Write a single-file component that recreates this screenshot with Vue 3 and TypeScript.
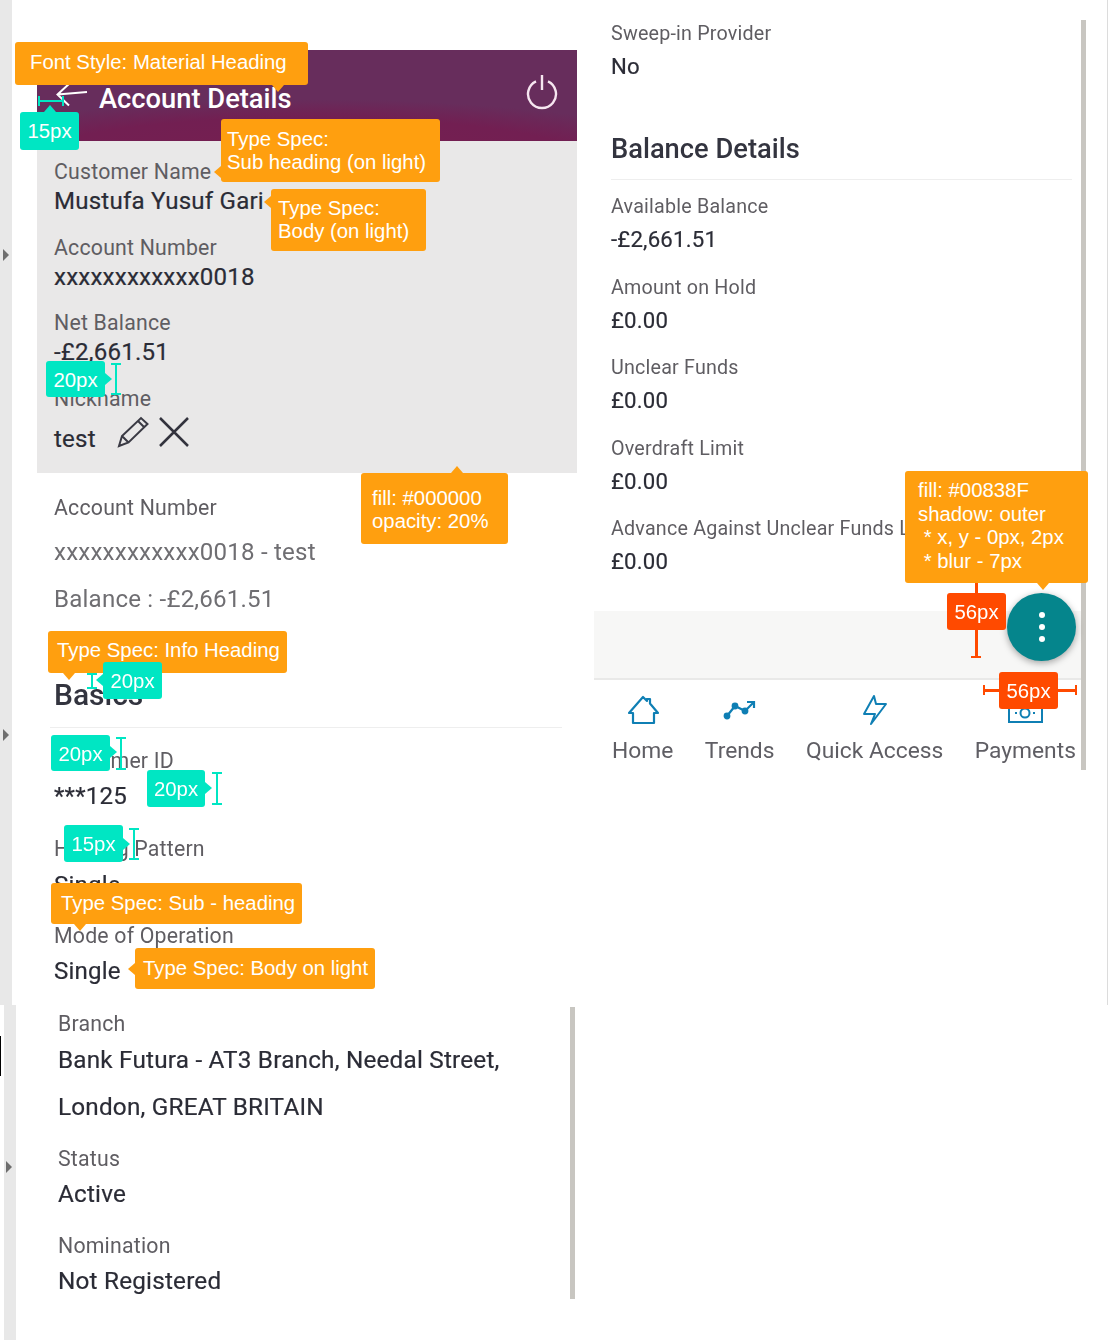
<script setup lang="ts">
interface Field { label: string; value: string }
const balances: Field[] = [
  { label: 'Available Balance', value: '-£2,661.51' },
  { label: 'Amount on Hold', value: '£0.00' },
  { label: 'Unclear Funds', value: '£0.00' },
  { label: 'Overdraft Limit', value: '£0.00' },
  { label: 'Advance Against Unclear Funds Limit', value: '£0.00' },
]
const summary: Field[] = [
  { label: 'Customer Name', value: 'Mustufa Yusuf Gari' },
  { label: 'Account Number', value: 'xxxxxxxxxxxx0018' },
  { label: 'Net Balance', value: '-£2,661.51' },
]
</script>

<template>
  <div class="page">
    <div class="top-row">
      <div class="rail">
        <i class="caret c1"></i>
        <i class="caret c2"></i>
      </div>

      <section class="left-col soft">
        <header class="app-bar">
          <svg class="back" viewBox="0 0 32 24" fill="none" stroke="#fff" stroke-width="2">
            <path d="M31 8 1.500 10.500M14 -1 1.500 10.500 13 21.500" />
          </svg>
          <h1 class="bar-title">Account Details</h1>
          <svg class="power" viewBox="0 0 32 36" fill="none" stroke="#f6e6f0" stroke-width="2.400">
            <path d="M10 7.400a14 14 0 1 0 12 0M16 1v15" />
          </svg>
        </header>

        <div class="summary">
          <div v-for="f in summary" :key="f.label" class="field summary-field">
            <div class="label">{{ f.label }}</div>
            <div class="value">{{ f.value }}</div>
          </div>
          <div class="field">
            <div class="label">Nickname</div>
            <div class="nick-row">
              <span class="value nick">test</span>
              <svg class="pencil" viewBox="0 0 32 32" fill="none" stroke="#3a3a44" stroke-width="2">
                <path d="M2 30 5 20 24 2 30.500 8 11.500 26.500ZM5 20l6.500 6.500M21 5l6.500 6.500" />
              </svg>
              <svg class="close" viewBox="0 0 30 30" fill="none" stroke="#33333d" stroke-width="2.500">
                <path d="M1 1 29 29M29 1 1 29" />
              </svg>
            </div>
          </div>
        </div>

        <div class="details">
          <div class="label d-account">Account Number</div>
          <div class="select-line s1">xxxxxxxxxxxx0018 - test</div>
          <div class="select-line s2">Balance : -£2,661.51</div>

          <h2 class="section-title basics">Basics</h2>

          <div class="label m-customer">Customer ID</div>
          <div class="value g9">***125</div>
          <div class="label m-holding">Holding Pattern</div>
          <div class="value g10">Single</div>
          <div class="label m-mode">Mode of Operation</div>
          <div class="value g9">Single</div>
        </div>
      </section>

      <section class="right-col">
        <div class="pane soft">
          <div class="pane-body">
            <div class="label">Sweep-in Provider</div>
            <div class="value g6">No</div>
            <h2 class="section-title balance">Balance Details</h2>
            <div v-for="f in balances" :key="f.label" class="field balance-field">
              <div class="label nowrap">{{ f.label }}</div>
              <div class="value g6">{{ f.value }}</div>
            </div>
          </div>
          <div class="action-bar">
            <button class="fab" type="button" aria-label="More">
              <i></i><i></i><i></i>
            </button>
          </div>
          <nav class="tabs">
            <div class="tab">
              <svg viewBox="0 0 36 36" fill="none" stroke="#0f7fb4" stroke-width="2.200" stroke-linejoin="round">
                <path d="M8 20v10h21V20h4L25 10.500V6h-3v2L18 4 4 20Z" />
              </svg>
              <span>Home</span>
            </div>
            <div class="tab">
              <svg viewBox="0 0 36 36" fill="none" stroke="#0f7fb4" stroke-width="2.200">
                <path d="M5 23 13 13 23 18 32 9M25 9h7v6" />
                <circle cx="5" cy="23" r="2.300" fill="#0f7fb4" />
                <circle cx="13" cy="13" r="2.300" fill="#0f7fb4" />
                <circle cx="23" cy="18" r="2.300" fill="#0f7fb4" />
              </svg>
              <span>Trends</span>
            </div>
            <div class="tab">
              <svg viewBox="0 0 36 36" fill="none" stroke="#0f7fb4" stroke-width="2" stroke-linejoin="round">
                <path d="M17 3 7 21h11l-4 10L29 11H19Z" />
              </svg>
              <span>Quick Access</span>
            </div>
            <div class="tab">
              <svg viewBox="0 0 36 36" fill="none" stroke="#0f7fb4" stroke-width="2">
                <rect x="2" y="10" width="33" height="19" />
                <circle cx="18" cy="20" r="4.500" />
                <path d="M8 20h2M26 20h2" />
              </svg>
              <span>Payments</span>
            </div>
          </nav>
        </div>
        <div class="scrollbar tall"></div>
      </section>
    </div>

    <div class="bottom-row">
      <div class="edge"><i></i></div>
      <div class="rail low"><i class="caret c3"></i></div>
      <section class="lower">
        <div class="lower-body soft">
          <div class="label">Branch</div>
          <div class="value long">Bank Futura - AT3 Branch, Needal Street,<br />London, GREAT BRITAIN</div>
          <div class="label m-status">Status</div>
          <div class="value g9">Active</div>
          <div class="label m-nomination">Nomination</div>
          <div class="value g9">Not Registered</div>
        </div>
        <div class="scrollbar short"></div>
      </section>
    </div>

    <!-- redline annotations laid over the screens -->
    <div class="ann orange a-material tip-down">Font Style: Material Heading</div>
    <i class="br-h teal b-15"></i>
    <div class="ann teal-box a-15 tip-up">15px</div>
    <div class="ann orange a-sub tip-left">Type Spec:<br />Sub heading (on light)</div>
    <div class="ann orange a-body tip-left">Type Spec:<br />Body (on light)</div>
    <i class="br-v teal b-20a"></i>
    <div class="ann teal-box a-20a tip-right">20px</div>
    <div class="ann orange a-fill tip-up">fill: #000000<br />opacity: 20%</div>
    <div class="ann orange a-info tip-down">Type Spec: Info Heading</div>
    <i class="br-v teal b-20b"></i>
    <div class="ann teal-box a-20b tip-left">20px</div>
    <i class="br-v teal b-20c"></i>
    <div class="ann teal-box a-20c tip-right">20px</div>
    <i class="br-v teal b-20d"></i>
    <div class="ann teal-box a-20d tip-right">20px</div>
    <i class="br-v teal b-15b"></i>
    <div class="ann teal-box a-15b tip-right">15px</div>
    <div class="ann orange a-subh tip-down">Type Spec: Sub - heading</div>
    <div class="ann orange a-bodyl tip-left">Type Spec: Body on light</div>
    <div class="ann orange a-fab tip-down">fill: #00838F<br />shadow: outer<br />&nbsp;* x, y - 0px, 2px<br />&nbsp;* blur - 7px</div>
    <i class="br-v red b-56v"></i>
    <div class="ann red-box a-56v">56px</div>
    <i class="br-h red b-56h"></i>
    <div class="ann red-box a-56h">56px</div>
  </div>
</template>

<style>
html, body { margin: 0; background: #fff; }
</style>

<style scoped>
.page {
  position: relative;
  width: 1108px;
  height: 1340px;
  overflow: hidden;
  background: #fff;
  display: flex;
  flex-direction: column;
  font-family: Roboto, "Liberation Sans", sans-serif;
}
.soft { filter: blur(0.4px); }
.top-row { display: flex; height: 1005px; flex: none; border-right: 1px solid #dcdcdc; box-sizing: border-box; }
.rail { width: 12px; flex: none; background: #e8e8e8; display: flex; flex-direction: column; }
.caret { display: block; width: 0; height: 0; border-left: 6px solid #6e6e6e; border-top: 6px solid transparent; border-bottom: 6px solid transparent; margin-left: 3px; }
.c1 { margin-top: 249px; }
.c2 { margin-top: 468px; }
.c3 { margin-top: 156px; margin-left: 2px; }

.left-col { width: 582px; flex: none; box-sizing: border-box; padding: 50px 17px 0 25px; }
.app-bar {
  height: 91px;
  box-sizing: border-box;
  padding: 0 19px;
  display: flex;
  align-items: center;
  color: #fff;
  background:
    radial-gradient(ellipse 400px 62px at 50% 122%, #761f50 0%, #721f52 70%, rgba(112, 31, 83, 0) 100%),
    #672d5c;
}
.back { width: 32px; height: 24px; overflow: visible; flex: none; }
.bar-title { margin: 6px 0 0 11px; font-size: 27.300px; line-height: 32px; font-weight: 500; letter-spacing: 0; flex: 1; }
.power { width: 32px; height: 36px; flex: none; margin: -7px 0 0 0; }

.summary { height: 332px; box-sizing: border-box; background: #e9e8e8; padding: 19px 17px 0; }
.summary-field { margin-bottom: 19.500px; }
.summary-field .value { margin-top: 2px; }

.label { font-size: 21.300px; line-height: 24px; color: #5f5d62; letter-spacing: 0.2px; padding-top: 1px; margin-bottom: -1px; }
.summary .label { padding-top: 0; margin-bottom: 0; }
.value { font-size: 24.100px; line-height: 30px; color: #2b2c36; letter-spacing: 0.2px; -webkit-text-stroke: 0.2px #2b2c36; }
.nowrap { white-space: nowrap; }
.g6 { margin-top: 6px; }
.g9 { margin-top: 9px; }
.g10 { margin-top: 10px; }

.nick-row { display: flex; align-items: flex-start; margin-top: 2px; }
.nick { margin-top: 11px; width: 63px; }
.pencil { width: 32px; height: 32px; margin-top: 3px; }
.close { width: 30px; height: 30px; margin: 4px 0 0 10px; }

.details { padding: 22px 0 0 17px; }
.select-line { font-size: 24.100px; line-height: 30px; color: #6f6e72; letter-spacing: 0.2px; }
.s1 { margin-top: 18px; }
.s2 { margin-top: 17px; }

.section-title { margin: 0; font-size: 27.300px; line-height: 32px; font-weight: 500; color: #33343f; padding-bottom: 16px; border-bottom: 1px solid #eeeeee; }
.basics { margin: 65px 15px 0 -4px; padding-left: 4px; font-size: 30px; }
.m-customer { margin-top: 20px; }
.m-holding { margin-top: 25px; }
.m-mode { margin-top: 23px; }

.right-col { flex: 1; min-width: 0; display: flex; padding-top: 20px; box-sizing: border-box; }
.pane { width: 487px; height: 750px; display: flex; flex-direction: column; flex: none; }
.pane-body { padding: 1px 9px 0 17px; flex: 1; min-height: 0; }
.pane-body .label { font-size: 19.700px; }
.pane-body .value { font-size: 22.200px; }
.balance { margin: 52px 0 14px; padding-bottom: 14px; }
.balance-field { margin-bottom: 20.600px; }

.action-bar { position: relative; height: 67px; flex: none; background: #f7f7f6; border-bottom: 2px solid #e9e9e8; }
.fab {
  position: absolute;
  left: 413px;
  top: -18px;
  width: 69px;
  height: 68px;
  border: 0;
  border-radius: 50%;
  padding: 0;
  background: #05858c;
  box-shadow: 0 2px 7px rgba(0, 0, 0, 0.35);
  display: flex;
  flex-direction: column;
  align-items: center;
  justify-content: center;
  gap: 6px;
}
.fab i { width: 6px; height: 6px; border-radius: 50%; background: #fff; display: block; }

.tabs { height: 90px; flex: none; box-sizing: border-box; padding: 13px 0 0 18px; display: flex; gap: 31.500px; }
.tab { display: flex; flex-direction: column; align-items: center; gap: 10px; font-size: 22.800px; line-height: 24px; color: #5f5e64; white-space: nowrap; }
.tab svg { width: 36px; height: 36px; }

.scrollbar { width: 5px; flex: none; background: #c8c6c1; }
.tall { height: 750px; }
.short { height: 292px; margin-top: 2px; }

.bottom-row { display: flex; flex: 1; }
.edge { width: 4px; flex: none; }
.edge i { display: block; width: 1px; height: 40px; margin-top: 31px; background: #000; }
.low { background: #e8e8e8; }
.lower { display: flex; flex: 1; }
.lower-body { width: 554px; box-sizing: border-box; padding: 6px 0 0 42px; }
.lower-body .value { font-size: 24.300px; }
.long { line-height: 47px; padding-top: 1px; }
.m-status { margin-top: 15.500px; }
.m-nomination { margin-top: 24px; }

.ann {
  position: absolute;
  box-sizing: border-box;
  font-family: "Liberation Sans", Arial, sans-serif;
  font-size: 20.350px;
  line-height: 23px;
  color: #fff;
  border-radius: 3px;
  white-space: nowrap;
  z-index: 3;
}
.orange { background: #ff9f0f; --tip: #ff9f0f; }
.teal-box { background: #00e6c3; --tip: #00e6c3; text-align: center; line-height: 38px; }
.red-box { background: #ff4a00; text-align: center; line-height: 38px; }

.ann::after { content: ""; position: absolute; width: 0; height: 0; border: 6px solid transparent; }
.red-box::after { display: none; }
.tip-down::after { top: 100%; border-top: 7px solid var(--tip); border-bottom: 0; }
.tip-up::after { bottom: 100%; border-bottom: 7px solid var(--tip); border-top: 0; }
.tip-left::after { right: 100%; border-right: 7px solid var(--tip); border-left: 0; }
.tip-right::after { left: 100%; border-left: 7px solid var(--tip); border-right: 0; }

.a-material { left: 15px; top: 42px; width: 293px; height: 43px; padding: 9px 0 0 15px; }
.a-material::after { left: 257px; }
.a-15 { left: 20px; top: 112px; width: 59px; height: 38px; }
.a-15::after { left: 24px; }
.a-sub { left: 221px; top: 119px; width: 219px; height: 63px; padding: 9px 0 0 6px; }
.a-sub::after { top: 47px; }
.a-body { left: 271px; top: 189px; width: 155px; height: 62px; padding: 8px 0 0 7px; }
.a-body::after { top: 7px; }
.a-20a { left: 46px; top: 361px; width: 59px; height: 36px; }
.a-20a::after { top: 12px; }
.a-fill { left: 361px; top: 473px; width: 147px; height: 71px; padding: 14px 0 0 11px; }
.a-fill::after { left: 90px; }
.a-info { left: 48px; top: 631px; width: 239px; height: 42px; padding: 8px 0 0 9px; }
.a-info::after { left: 15px; }
.a-20b { left: 103px; top: 662px; width: 59px; height: 37px; }
.a-20b::after { top: 12px; }
.a-20c { left: 51px; top: 735px; width: 59px; height: 36px; }
.a-20c::after { top: 11px; }
.a-20d { left: 147px; top: 770px; width: 58px; height: 37px; }
.a-20d::after { top: 12px; }
.a-15b { left: 64px; top: 825px; width: 59px; height: 37px; }
.a-15b::after { top: 13px; }
.a-subh { left: 51px; top: 883px; width: 251px; height: 41px; padding: 9px 0 0 10px; }
.a-subh::after { left: 23px; }
.a-bodyl { left: 135px; top: 948px; width: 240px; height: 41px; padding: 9px 0 0 8px; }
.a-bodyl::after { top: 15px; }
.a-fab { left: 905px; top: 471px; width: 183px; height: 112px; padding: 8px 0 0 13px; line-height: 23.700px; }
.a-fab::after { left: 132px; }
.a-56v { left: 947px; top: 593px; width: 59px; height: 37px; }
.a-56h { left: 999px; top: 672px; width: 59px; height: 37px; }

.br-v, .br-h { position: absolute; display: block; z-index: 2; background: var(--c); }
.br-v { width: 2px; }
.br-h { height: 2px; }
.br-v::before, .br-v::after { content: ""; position: absolute; left: -4px; width: 10px; height: 2px; background: var(--c); }
.br-v::before { top: 0; }
.br-v::after { bottom: 0; }
.br-h::before, .br-h::after { content: ""; position: absolute; top: -4px; width: 2px; height: 10px; background: var(--c); }
.br-h::before { left: 0; }
.br-h::after { right: 0; }
.teal { --c: #00e6c3; }
.red { --c: #ff4a00; }
.br-v.red { width: 3px; }
.br-h.red { height: 3px; }

.b-15 { left: 38px; top: 100px; width: 26px; }
.b-20a { left: 115px; top: 363px; height: 32px; }
.b-20b { left: 91px; top: 673px; height: 16px; }
.b-20c { left: 120px; top: 737px; height: 33px; }
.b-20d { left: 216px; top: 772px; height: 33px; }
.b-15b { left: 133px; top: 828px; height: 32px; }
.b-56v { left: 975px; top: 564px; height: 94px; }
.b-56h { left: 983px; top: 689px; width: 94px; }
</style>
